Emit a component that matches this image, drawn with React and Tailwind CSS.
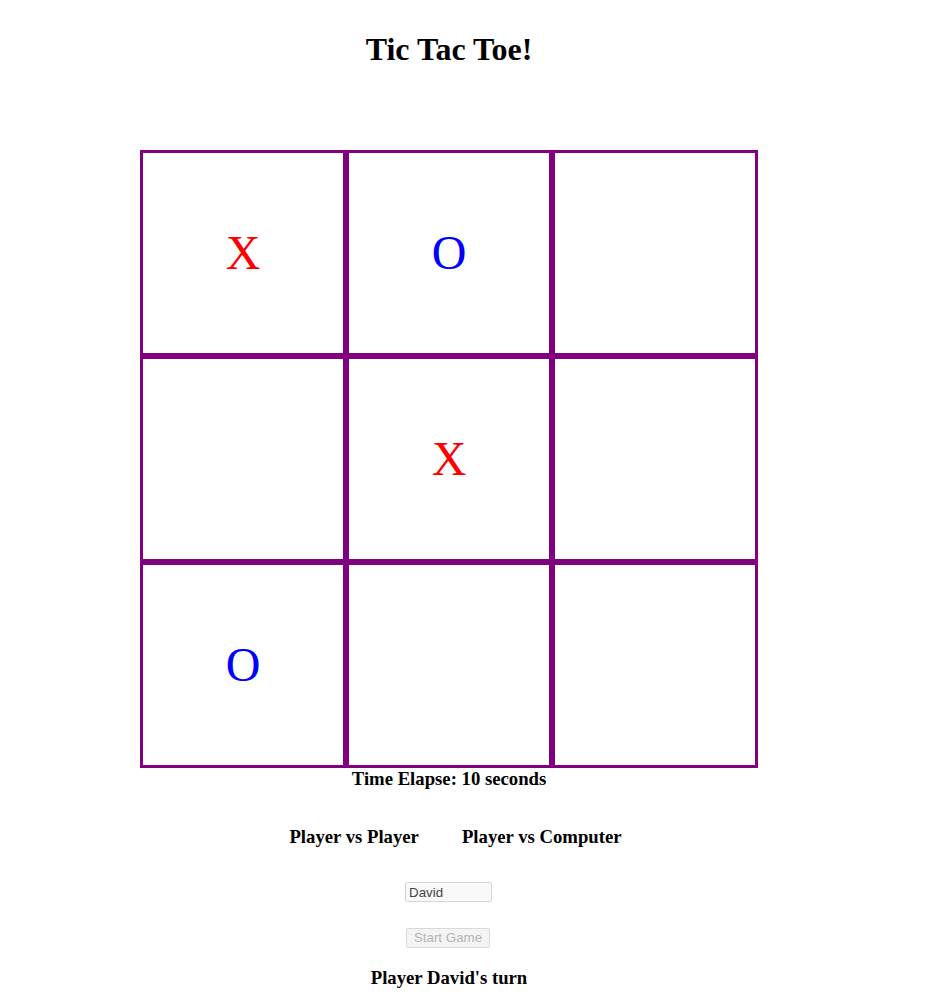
import React from "react";

const board = ["X", "O", "", "", "X", "", "O", "", ""];

export default function App() {
  return (
    <div className="w-[898px] bg-white text-black text-center font-['Liberation_Serif','Times_New_Roman',serif]">
      <h1 className="pt-[31px] text-[32px] leading-[37px] font-bold">Tic Tac Toe!</h1>
      <div className="mt-[82px] flex justify-center">
        <div className="grid grid-cols-3 w-[618px]">
          {board.map((v, i) => (
            <div
              key={i}
              className="h-[206px] w-[206px] border-[3px] border-[#800080] flex items-center justify-center"
            >
              <span
                className={`text-[48px] leading-none ${v === "X" ? "text-[#ff0000]" : "text-[#0000ff]"}`}
              >
                {v}
              </span>
            </div>
          ))}
        </div>
      </div>
      <div className="text-[18.72px] leading-[21px] font-bold">Time Elapse: 10 seconds</div>
      <div className="mt-[37px] flex justify-center gap-[43px] ml-[13px] text-[18.72px] leading-[21px] font-bold">
        <span>Player vs Player</span>
        <span>Player vs Computer</span>
      </div>
      <div className="mt-[35px] flex justify-center">
        <input
          disabled
          value="David"
          readOnly
          className="mr-[1px] w-[87px] h-[20px] px-[3px] text-left text-[13.33px] font-['Liberation_Sans',Arial,sans-serif] text-[#444444] bg-[#f9f9f9] border border-[#d6d6d6] rounded-[2px]"
        />
      </div>
      <div className="mt-[26px] flex justify-center">
        <button
          disabled
          className="mr-[2px] w-[84px] h-[20px] text-[13.33px] leading-none font-['Liberation_Sans',Arial,sans-serif] text-[#b5b5b5] bg-[#f4f4f4] border border-[#d9d9d9] rounded-[2px]"
        >
          Start Game
        </button>
      </div>
      <div className="mt-[19px] text-[18.72px] leading-[21px] font-bold">Player David's turn</div>
    </div>
  );
}
